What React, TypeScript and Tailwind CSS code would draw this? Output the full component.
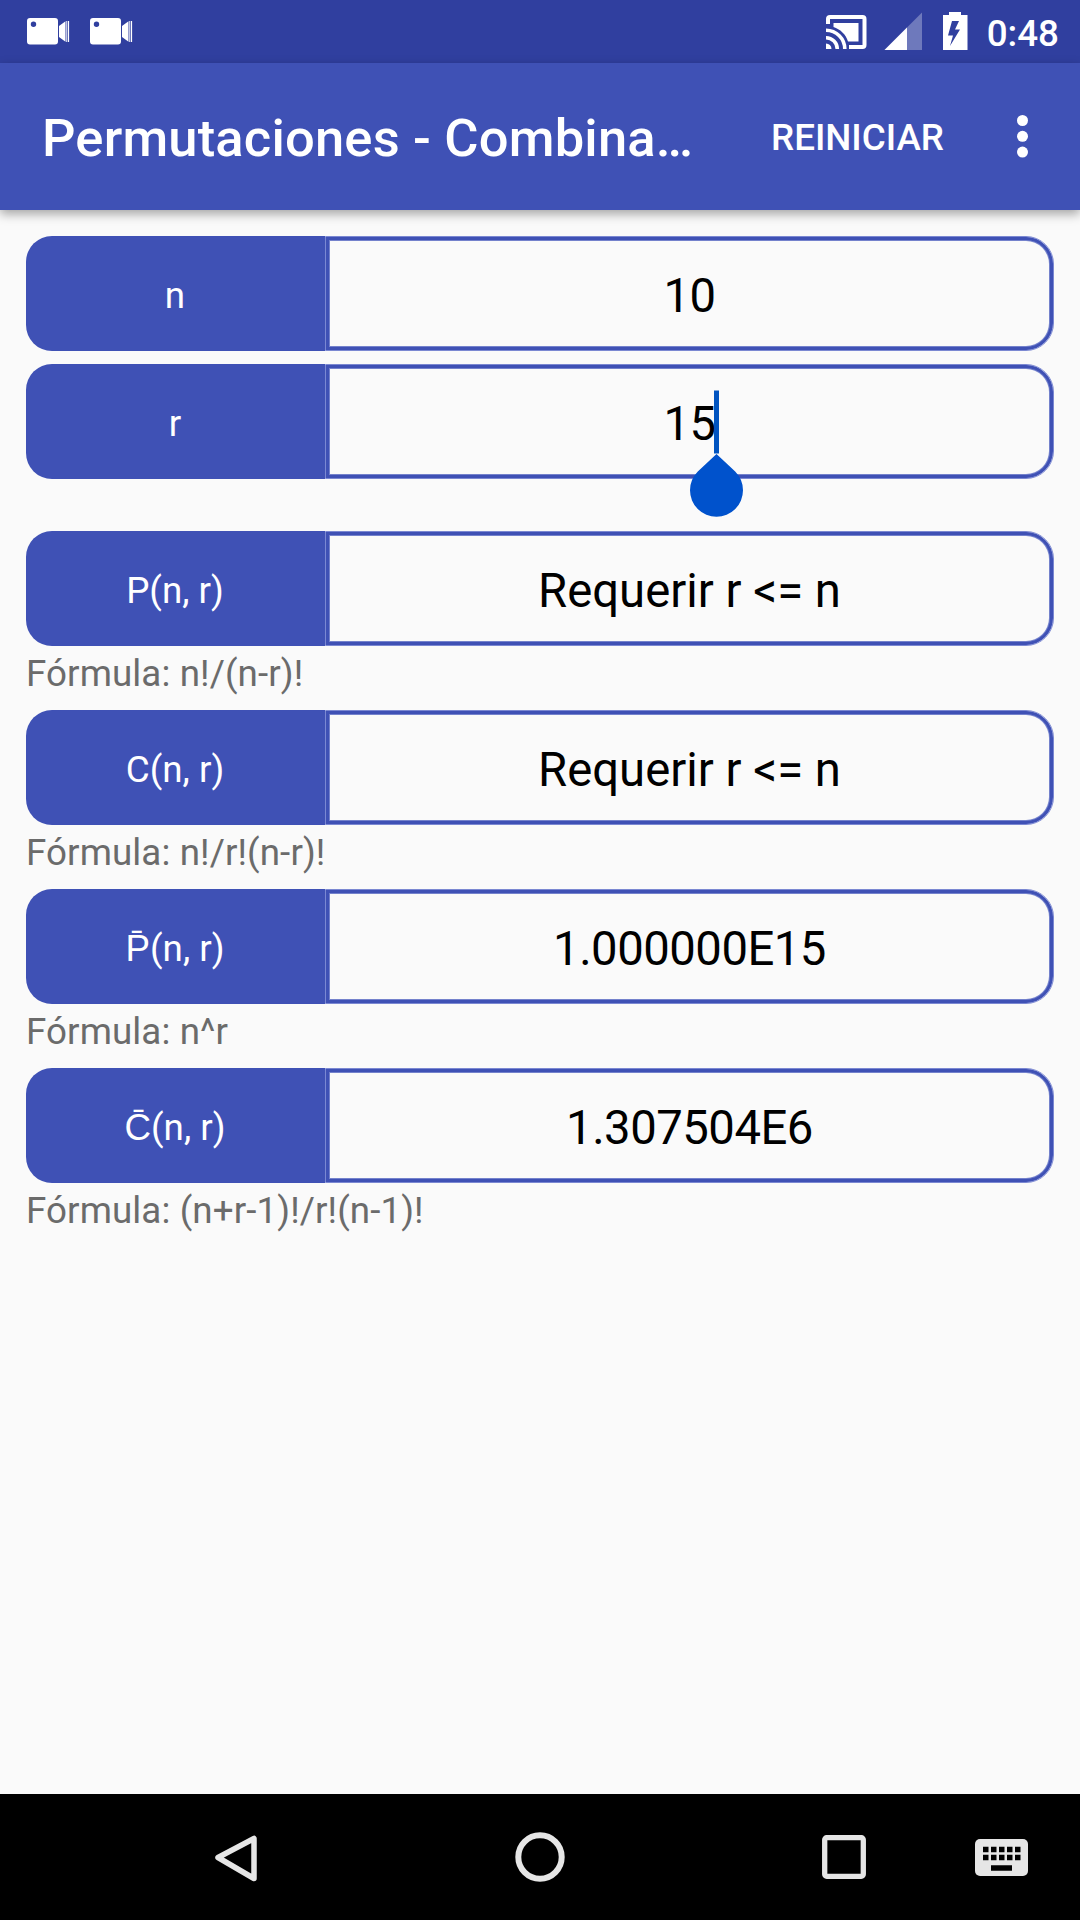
interface Field {
  label: string
  value: string
  formula?: string
  focused?: boolean
}

const inputs: Field[] = [
  { label: 'n', value: '10' },
  { label: 'r', value: '15', focused: true },
]

const results: Field[] = [
  { label: 'P(n, r)', value: 'Requerir r <= n', formula: 'n!/(n-r)!' },
  { label: 'C(n, r)', value: 'Requerir r <= n', formula: 'n!/r!(n-r)!' },
  { label: 'P̄(n, r)', value: '1.000000E15', formula: 'n^r' },
  { label: 'C̄(n, r)', value: '1.307504E6', formula: '(n+r-1)!/r!(n-1)!' },
]

function CameraIcon() {
  return (
    <svg width="63" height="63" viewBox="0 0 63 63" fill="#fff">
      <path
        fillRule="evenodd"
        d="M14 18h25a3 3 0 0 1 3 3v20.500a3 3 0 0 1-3 3h-25a3 3 0 0 1-3-3V21a3 3 0 0 1 3-3zM17.500 21.600a2.700 2.700 0 1 0 0 5.400a2.700 2.700 0 0 0 0-5.400z"
      />
      <path d="M43 26l6.500-4.700v20.500l-6.500-4.700zM50.300 21h.9v21h-.9zM51.900 21h1.200v21h-1.200z" />
    </svg>
  )
}

function StatusBar() {
  return (
    <header className="flex h-[63px] items-center justify-between bg-[#303f9f] pl-[15.5px] pr-[21px]">
      <div className="flex">
        <CameraIcon />
        <CameraIcon />
      </div>
      <div className="flex items-center">
        <svg width="153" height="63" viewBox="820 0 153 63" fill="#fff">
          <path
            fillRule="evenodd"
            d="M830 15h32.500a4 4 0 0 1 4 4v26a4 4 0 0 1-4 4H849v-4h13.500V19H830v5h-4v-5a4 4 0 0 1 4-4z"
          />
          <path d="M833.500 23h25v18.500h-10.500c-2-7-8-12.500-14.500-14.500z" />
          <path d="M826 43.500a5.500 5.500 0 0 1 5.500 5.500H826z" />
          <g fill="none" stroke="#fff" strokeWidth="3.600">
            <path d="M826 37.700a11.300 11.300 0 0 1 11.300 11.300M826 30.200a18.800 18.800 0 0 1 18.800 18.800" />
          </g>
          <path d="M922 12.500V50h-37.500z" opacity=".3" />
          <path d="M907 27.500V50h-22.500z" />
          <path
            fillRule="evenodd"
            d="M949 12h12v3h6.500v35H943V15h6zM952 21l-4 14.500h5l-3 10.500 10-16.500h-5l4-8.500z"
          />
        </svg>
        <span className="ml-[14px] pt-[5px] text-[36.75px] font-medium leading-none text-white">0:48</span>
      </div>
    </header>
  )
}

function AppBar() {
  return (
    <div className="flex h-[147px] items-center bg-[#3f51b5] text-white shadow-[0_4px_10px_rgba(0,0,0,0.35)]">
      <h1 className="w-[728px] whitespace-nowrap pl-[42px] pt-[4px] text-[52.5px] font-medium leading-none tracking-[0.18px]">
        Permutaciones - Combina…
      </h1>
      <button className="w-[259px] pl-[43px] pt-[3px] text-left text-[36.75px] font-medium leading-none">
        REINICIAR
      </button>
      <svg width="72" height="63" viewBox="0 0 72 63" fill="#fff">
        <circle cx="35.500" cy="15.500" r="5.500" />
        <circle cx="35.500" cy="31.300" r="5.500" />
        <circle cx="35.500" cy="47.100" r="5.500" />
      </svg>
    </div>
  )
}

function CaretHandle() {
  return (
    <span className="absolute left-full top-1/2 ml-[-1.5px] mt-[-3px] h-[63px] w-[5px] -translate-y-1/2 bg-[#0054c0]">
      <svg className="absolute left-[-24px] top-[63px]" width="53" height="64" viewBox="0 0 53 64">
        <path d="M26.500 .5L45.200 18a26.500 26.500 0 1 1-37.400 0z" fill="#0052cc" />
      </svg>
    </span>
  )
}

function FieldRow({ label, value, focused }: Field) {
  const numeric = /^\d/.test(value)

  return (
    <div className="flex h-[115px]">
      <div className="flex w-[299px] items-center justify-center rounded-l-[26px] bg-[#3f51b5] pt-[5px] pr-px text-[36.75px] leading-none text-white">
        {label}
      </div>
      {/* soft outer and inner edge around a solid outline */}
      <div className="flex flex-1 items-center justify-center rounded-r-[28px] border border-[#7b88d2] pt-[7px] text-[47.25px] leading-none text-black shadow-[inset_0_0_0_3px_#3f51b5,inset_0_0_0_4px_#7482cc]">
        <span className={numeric ? 'relative tracking-[-0.5px]' : 'relative'}>
          {value}
          {focused && <CaretHandle />}
        </span>
      </div>
    </div>
  )
}

export default function App() {
  return (
    <div className="flex h-[1920px] w-[1080px] flex-col bg-[#fafafa] font-['Roboto',sans-serif]">
      <StatusBar />
      <AppBar />
      <main className="flex-1 pl-[26px] pr-[26px] pt-[26px]">
        <div className="flex flex-col gap-[13px]">
          {inputs.map((f) => (
            <FieldRow key={f.label} {...f} />
          ))}
        </div>
        <div className="mt-[52px]">
          {results.map((f) => (
            <div key={f.label} className="h-[179px]">
              <FieldRow {...f} />
              <p className="pt-[6px] text-[36.75px] leading-[44px] tracking-[0.1px] text-[#6b6b6b]">
                Fórmula: {f.formula}
              </p>
            </div>
          ))}
        </div>
      </main>
      <nav className="h-[126px] bg-black">
        <svg width="1080" height="126" viewBox="0 0 1080 126" fill="none" stroke="#e6e6e6">
          <path d="M254 44.500v40l-36-21z" strokeWidth="5.500" strokeLinejoin="round" />
          <circle cx="540" cy="63" r="21.700" strokeWidth="6" />
          <rect x="824.700" y="43.700" width="38.600" height="38.600" rx="2" strokeWidth="5.300" />
          <rect x="975" y="45" width="53" height="37" rx="5" fill="#e6e6e6" stroke="none" />
          <path d="M983 55.500h38M983 63.500h38" stroke="#000" strokeWidth="5.300" strokeDasharray="5.500 2.500" />
          <path d="M991 74h21" stroke="#000" strokeWidth="5.500" />
        </svg>
      </nav>
    </div>
  )
}
